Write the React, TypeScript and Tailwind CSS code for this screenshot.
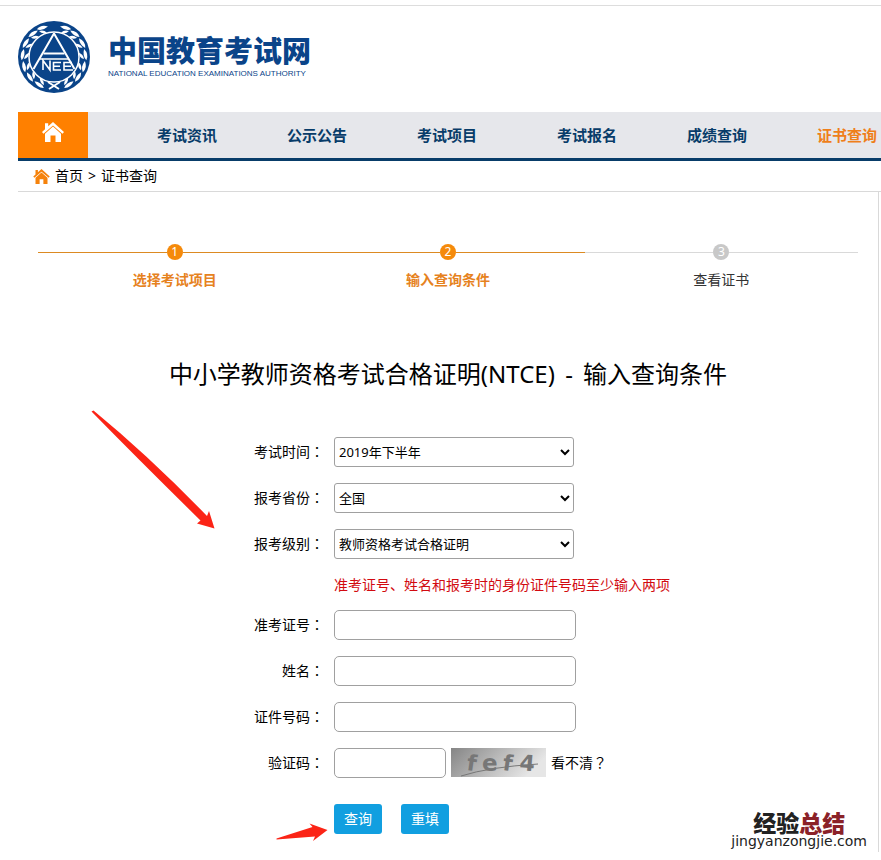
import type { ReactNode } from "react";

const navItems = [
  { label: "考试资讯" },
  { label: "公示公告" },
  { label: "考试项目" },
  { label: "考试报名", spaced: true },
  { label: "成绩查询" },
  { label: "证书查询", active: true },
];

const steps = [
  { label: "选择考试项目", done: true },
  { label: "输入查询条件", done: true },
  { label: "查看证书", done: false },
];

const leafAngles = [20, 42, 64, 86, 108, 130, 150];

function Wreath() {
  return (
    <g fill="#fff">
      {leafAngles.map((a) => (
        <g key={a} transform={`rotate(${a} 36 36)`}>
          <path d="M37 68.500 Q31 71 26 65.500 Q33 64 37 68.500Z" />
          <path d="M36 66 Q31 65 30 60.500 Q35 61 36 66Z" />
        </g>
      ))}
    </g>
  );
}

function Seal() {
  return (
    <svg className="size-[72px] shrink-0" viewBox="0 0 72 72" aria-hidden="true">
      <circle cx="36" cy="36" r="36" fill="#0a4489" />
      <Wreath />
      <g transform="translate(72 0) scale(-1 1)">
        <Wreath />
      </g>
      <path d="M30 61 L41 68 M42 61 L31 68" stroke="#fff" strokeWidth="2" />
      <circle cx="36" cy="36" r="25" fill="#0a4489" stroke="#fff" strokeWidth="1.500" />
      <g fill="none" stroke="#fff">
        <path d="M36 12.500 L15.500 48 M36 12.500 L56.500 48" strokeWidth="2" />
        <path d="M25.500 32.500 H46.500" strokeWidth="2" />
        <path d="M21 38 H51" strokeWidth="1.500" />
        <path
          d="M25 49 V39.500 L32 49 V39.500 M43 41.500 H35.500 V49 H43 M35.500 45.200 H42 M54 41.500 H46 V49 H55 M46 45.200 H53"
          strokeWidth="1.600"
        />
      </g>
    </svg>
  );
}

function House({ className }: { className: string }) {
  return (
    <svg className={className} viewBox="0 0 22 20" fill="currentColor" aria-hidden="true">
      <path d="M11 0 L22 10 L20.500 11.800 L11 3.500 L1.500 11.800 L0 10 L3 7.200 V1.200 H6.200 V4.300Z" />
      <path d="M11 4.600 L19 11.700 V20 H13.500 V13.500 H8.500 V20 H3 V11.700Z" />
    </svg>
  );
}

function Punctuation({ children }: { children: string }) {
  return (
    <span lang="zh-TW" className="font-['Noto_Sans_CJK_TC',sans-serif] leading-none">
      {children}
    </span>
  );
}

function Row({ id, label, children }: { id: string; label: string; children: ReactNode }) {
  return (
    <div className="flex items-center gap-[10px]">
      <label htmlFor={id} className="w-[306px] shrink-0 text-right">
        {label}
        <Punctuation>：</Punctuation>
      </label>
      {children}
    </div>
  );
}

const selectClass = "h-[30px] w-[240px] rounded-[3px] border border-[#a0a0a0] bg-white text-[13px] text-black";
const inputClass = "h-[30px] rounded-[5px] border border-[#a0a0a0] bg-white px-2";
const buttonClass = "h-[30px] w-12 rounded-[3px] bg-[#119fe0] text-white";

export default function App() {
  return (
    <div
      lang="zh-CN"
      className="relative overflow-hidden bg-white pt-[5px] pb-2 font-['Noto_Sans','Noto_Sans_CJK_SC',sans-serif] text-[14px] leading-5 text-black"
    >
      <header className="flex h-[107px] items-start gap-[18px] border-t border-[#ddd] pt-[15px] pl-[18px]">
        <Seal />
        <div className="pt-[14px] text-[#0a4489]">
          <h1 className="text-[29px] leading-[32px] font-black whitespace-nowrap">中国教育考试网</h1>
          <p className="font-['Liberation_Sans',Arial,sans-serif] text-[8px] leading-[14px] whitespace-nowrap">
            NATIONAL EDUCATION EXAMINATIONS AUTHORITY
          </p>
        </div>
      </header>

      <div className="pl-[18px]">
        <nav className="flex h-[49px] overflow-hidden border-b-[3px] border-[#083c69] bg-[#e6e7eb]">
          <a href="#home" aria-label="首页" className="mr-[34px] flex w-[70px] shrink-0 justify-center bg-[#ff8000] pt-[10px] text-white">
            <House className="h-5 w-[22px]" />
          </a>
          {navItems.map((n) => (
            <a
              key={n.label}
              href="#nav"
              className={`flex w-[130px] shrink-0 items-center justify-center text-[15px] font-bold ${n.spaced ? "ml-[10px]" : ""} ${n.active ? "text-[#ef7f1a]" : "text-[#083c69]"}`}
            >
              {n.label}
            </a>
          ))}
        </nav>

        <div className="flex h-[31px] items-center gap-[5px] border-b border-[#d9d9d9] pl-[15px]">
          <House className="h-[15px] w-[17px] text-[#f5820b]" />
          <a href="#home">首页</a>
          <span>&gt;</span>
          <span>证书查询</span>
        </div>

        <main className="relative mr-[2px] border-r border-[#d9d9d9] pt-[52px] pb-[18px]">
          <ol className="mx-5 flex">
            {steps.map((s, i) => (
              <li key={s.label} className="flex-1 text-center">
                <div className="flex items-center">
                  <span className={`h-px flex-1 ${s.done ? "bg-[#dc8a22]" : "bg-[#d9d9d9]"}`} />
                  <span
                    className={`flex size-4 items-center justify-center rounded-full text-[12px] leading-4 text-white ${s.done ? "bg-[#f58a0b]" : "bg-[#c8c8c8]"}`}
                  >
                    {i + 1}
                  </span>
                  <span className={`h-px flex-1 ${s.done ? "bg-[#dc8a22]" : "bg-[#d9d9d9]"}`} />
                </div>
                <p className={`mt-[10px] ${s.done ? "font-bold text-[#e6821e]" : "text-[#333]"}`}>{s.label}</p>
              </li>
            ))}
          </ol>

          <h2 className="mt-[66px] text-center text-[24px] leading-9">
            中小学教师资格考试合格证明(NTCE) <span className="mx-1">-</span> 输入查询条件
          </h2>

          <form className="mt-[45px]" onSubmit={(e) => e.preventDefault()}>
            <div className="flex flex-col gap-4">
              <Row id="time" label="考试时间">
                <select id="time" className={selectClass}>
                  <option>2019年下半年</option>
                </select>
              </Row>
              <Row id="province" label="报考省份">
                <select id="province" className={selectClass}>
                  <option>全国</option>
                </select>
              </Row>
              <Row id="level" label="报考级别">
                <select id="level" className={selectClass}>
                  <option>教师资格考试合格证明</option>
                </select>
              </Row>
            </div>
            <p className="mt-4 mb-[15px] pl-[316px] text-[#d20a10]">准考证号、姓名和报考时的身份证件号码至少输入两项</p>
            <div className="flex flex-col gap-4">
              <Row id="ticket" label="准考证号">
                <input id="ticket" className={`${inputClass} w-[242px]`} />
              </Row>
              <Row id="name" label="姓名">
                <input id="name" className={`${inputClass} w-[242px]`} />
              </Row>
              <Row id="idno" label="证件号码">
                <input id="idno" className={`${inputClass} w-[242px]`} />
              </Row>
              <Row id="code" label="验证码">
                <div className="flex items-start gap-[5px]">
                  <input id="code" className={`${inputClass} w-[112px]`} />
                  <svg className="h-[29px] w-[95px]" viewBox="0 0 95 29" role="img" aria-label="验证码图片">
                    <defs>
                      <linearGradient id="shade" x1="0" y1="0" x2="1" y2="0.300">
                        <stop offset="0" stopColor="#858585" />
                        <stop offset="1" stopColor="#e6e6e6" />
                      </linearGradient>
                    </defs>
                    <rect width="95" height="29" fill="url(#shade)" />
                    <g fill="#777" fontFamily="DejaVu Sans" fontWeight="bold">
                      <text x="15" y="22" fontSize="22" transform="rotate(8 15 22)">f</text>
                      <text x="31" y="23" fontSize="23">e</text>
                      <text x="51" y="22" fontSize="22" transform="rotate(8 51 22)">f</text>
                      <text x="68" y="22" fontSize="22" transform="rotate(5 68 22)">4</text>
                    </g>
                    <path d="M10 28 Q38 19 87 16" fill="none" stroke="#777" strokeWidth="1" />
                  </svg>
                  <button type="button" className="h-[30px]">
                    看不清
                    <Punctuation>？</Punctuation>
                  </button>
                </div>
              </Row>
            </div>
            <div className="mt-[26px] flex gap-[19px] pl-[316px]">
              <button type="submit" className={buttonClass}>查询</button>
              <button type="reset" className={buttonClass}>重填</button>
            </div>
          </form>

          <svg className="pointer-events-none absolute top-[218px] left-[73px] h-[120px] w-[125px]" viewBox="91 410 125 120" aria-hidden="true">
            <path d="M91.500 411.500 L93.500 410.500 Q150 457 207 516 L209 511 L214.500 528.500 L197 523.500 L200.500 520.500 Q140 461 91.500 411.500 Z" fill="#fb2416" />
          </svg>
          <svg className="pointer-events-none absolute top-[630px] left-[258px] h-[20px] w-[52px]" viewBox="276 822 52 20" aria-hidden="true">
            <path d="M276.500 839.500 V838.500 L312.500 827 L309.500 823.500 L327.500 830 L313 841 L315 836.500 Z" fill="#fb2416" />
          </svg>
          <div className="absolute right-[11px] bottom-[3px] flex flex-col items-center text-[#222]">
            <p className="text-[23px] leading-5 font-black">
              经验<span className="text-[#8b2228]">总结</span>
            </p>
            <p className="font-['DejaVu_Sans',sans-serif] text-[14px] leading-4">jingyanzongjie.com</p>
          </div>
        </main>
      </div>
    </div>
  );
}
